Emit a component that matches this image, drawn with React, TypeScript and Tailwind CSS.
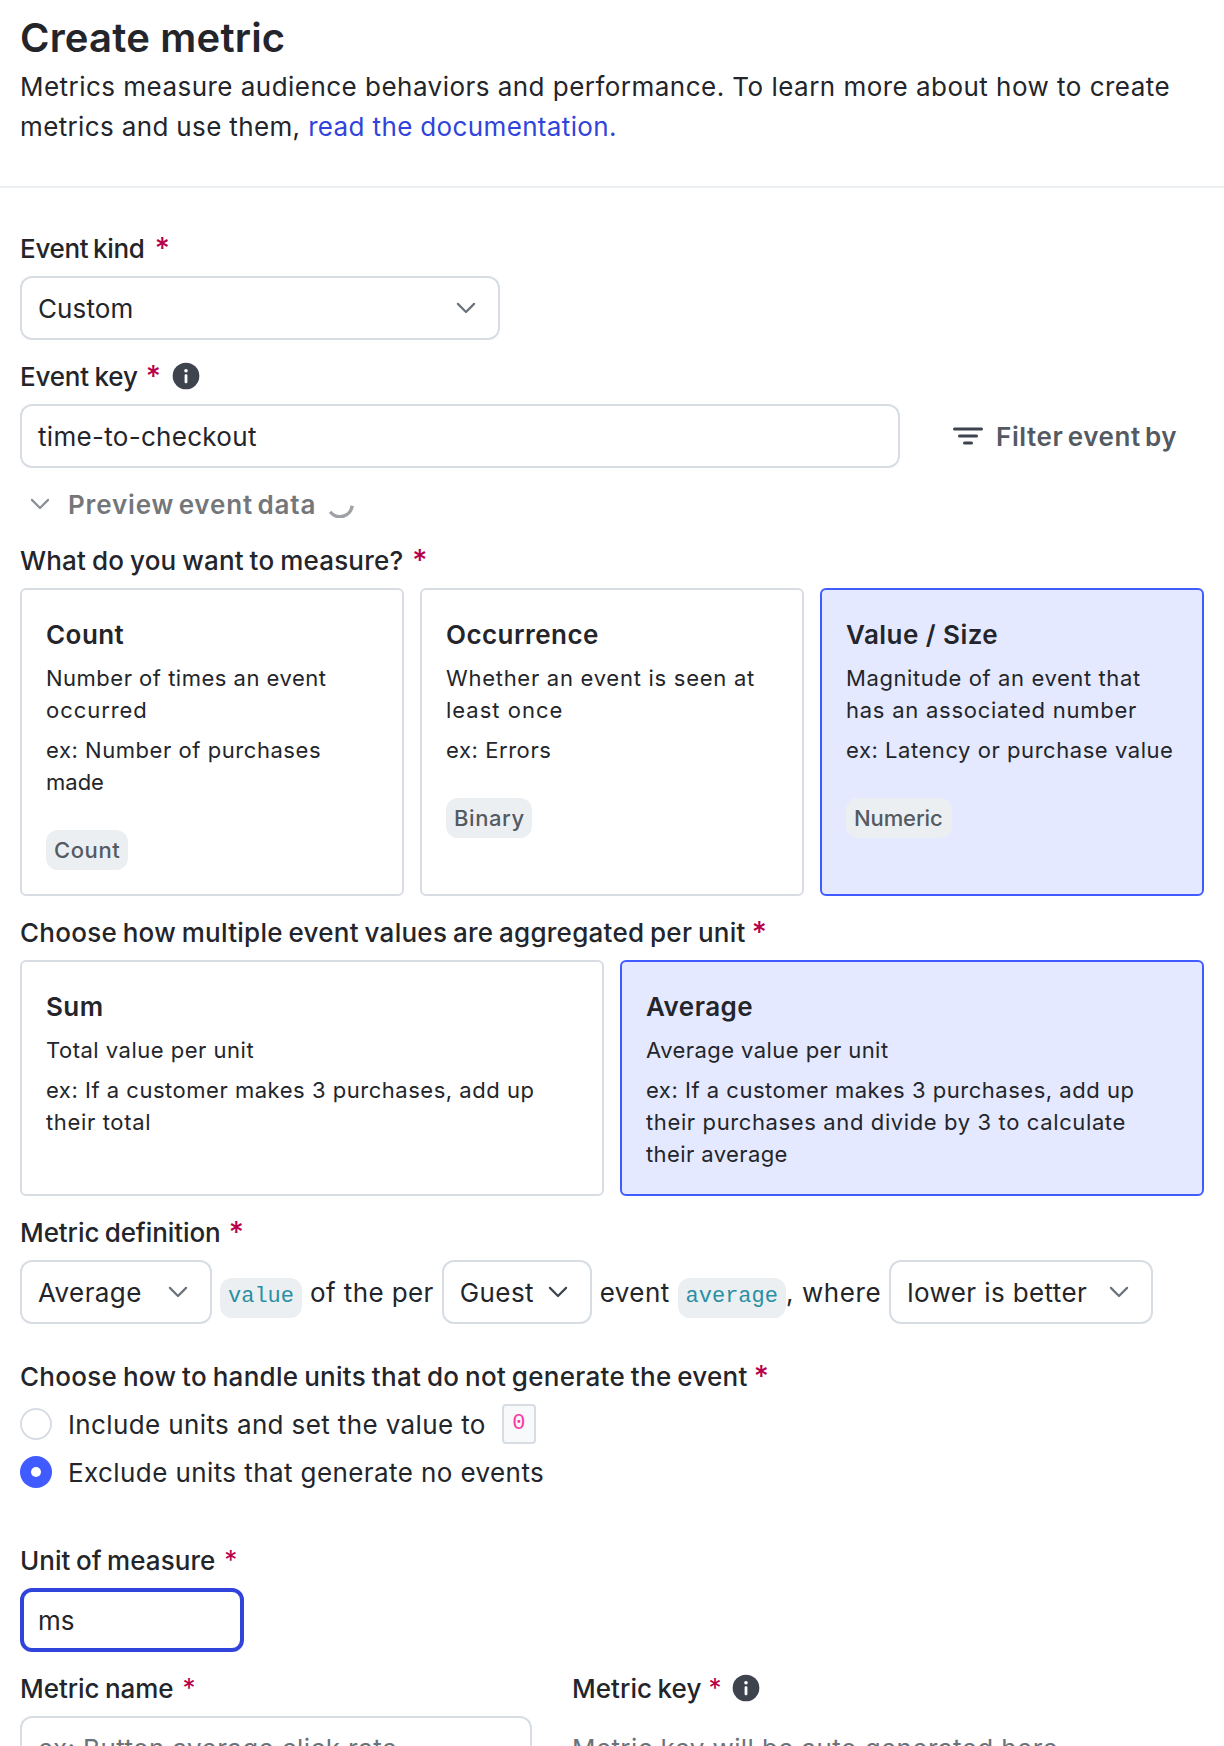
import React from "react";

function Chevron({ className = "text-[#6c727a]" }: { className?: string }) {
  return (
    <svg width="20" height="12" viewBox="0 0 10 6" fill="none" className={`shrink-0 ${className}`}>
      <path d="M.95.95 5 5 9.05.95" stroke="currentColor" strokeWidth="1.1" strokeLinecap="round" strokeLinejoin="round" />
    </svg>
  );
}

function InfoIcon() {
  return (
    <svg width="28" height="28" viewBox="0 0 14 14" className="shrink-0">
      <circle cx="7" cy="7" r="6.67" fill="#3d444d" />
      <circle cx="7" cy="4.35" r="0.9" fill="#fff" />
      <rect x="6.3" y="6.1" width="1.4" height="4.5" rx="0.6" fill="#fff" />
    </svg>
  );
}

function Label({
  children,
  textClass = "",
  starClass = "ml-2 text-[29px] font-medium",
  info = false,
}: {
  children: React.ReactNode;
  textClass?: string;
  starClass?: string;
  info?: boolean;
}) {
  return (
    <div className="mb-2 flex h-10 items-center font-medium whitespace-nowrap">
      <span className={`pt-0.5 ${textClass}`}>{children}</span>
      <span className={`text-[#b8004a] ${starClass}`}>*</span>
      {info && (
        <span className="ml-[11px]">
          <InfoIcon />
        </span>
      )}
    </div>
  );
}

function Select({
  value,
  className,
  chevron,
}: {
  value: string;
  className: string;
  chevron?: string;
}) {
  return (
    <div
      className={`flex h-16 shrink-0 items-center justify-between rounded-xl border-2 border-[#d8dde3] bg-white pr-[22px] pl-4 ${className}`}
    >
      <span className="pt-0.5 whitespace-nowrap">{value}</span>
      <Chevron className={chevron} />
    </div>
  );
}

type Line = [text: string, tracking: string];

function Lines({ lines }: { lines: Line[] }) {
  return (
    <>
      {lines.map(([text, tracking]) => (
        <span key={text} className={`block whitespace-nowrap ${tracking}`}>
          {text}
        </span>
      ))}
    </>
  );
}

function Card({
  title,
  desc,
  example,
  tag,
  tagClass = "",
  selected = false,
}: {
  title: string;
  desc: Line[];
  example: Line[];
  tag?: string;
  tagClass?: string;
  selected?: boolean;
}) {
  return (
    <div
      className={`flex flex-1 basis-0 flex-col items-start rounded-md border-2 p-6 text-[22px] leading-8 ${
        selected ? "border-[#405bff] bg-[#e4e9ff]" : "border-[#d8dde3] bg-white"
      }`}
    >
      <div className="h-10 pt-px text-[26px] leading-10 font-semibold tracking-[0.45px]">{title}</div>
      <p className="mt-2">
        <Lines lines={desc} />
      </p>
      <p className="mt-2">
        <Lines lines={example} />
      </p>
      {tag && (
        <span className={`mt-8 rounded-xl bg-[#ebeff2] py-1 pl-2 font-medium text-[#545a62] ${tagClass}`}>{tag}</span>
      )}
    </div>
  );
}

function Token({ children }: { children: string }) {
  return (
    <span className="mt-3 flex h-10 items-center rounded-xl bg-[#ebeff2] px-2 pb-[2px] font-['Liberation_Mono',monospace] text-[22px] leading-8 tracking-normal text-[#2b8fa4]">
      {children}
    </span>
  );
}

export default function App() {
  return (
    <div className="h-[1746px] w-[1224px] overflow-hidden bg-white font-['Inter',sans-serif] text-[26px] leading-10 text-[#23252a] [font-optical-sizing:none]">
      <header className="h-[188px] border-b-2 border-[#ebeff2] px-5 pt-[10px]">
        <h1 className="text-[40px] leading-[56px] font-semibold tracking-[0.2px]">Create metric</h1>
        <p className="pt-px whitespace-nowrap">
          <span className="block tracking-[0.47px]">
            Metrics measure audience behaviors and performance. To learn more about how to create
          </span>
          <span className="block tracking-[0.36px]">
            metrics and use them, <a className="text-[#3044dc]">read the documentation.</a>
          </span>
        </p>
      </header>

      <main className="flex flex-col gap-4 px-5 pt-10">
        <section>
          <Label textClass="tracking-[-0.3px] [word-spacing:-2px]" starClass="ml-[10px] text-[29px] font-medium">
            Event kind
          </Label>
          <Select value="Custom" className="w-[480px] tracking-[0.1px]" />
        </section>

        <section>
          <Label textClass="tracking-[-0.2px] [word-spacing:-1px]" info>
            Event key
          </Label>
          <div className="flex items-center">
            <div className="flex h-16 w-[880px] items-center rounded-xl border-2 border-[#d8dde3] px-4 tracking-[0.3px]">
              <span className="pt-0.5">time-to-checkout</span>
            </div>
            <div className="ml-[52px] flex items-center font-semibold text-[#545a62]">
              <svg width="32" height="20" viewBox="0 0 16 10" fill="none" stroke="#3d444d" strokeWidth="1.5" strokeLinecap="round">
                <path d="M1.25 1.5h13.5M3.75 5h8.5M6.25 8.5h3.5" />
              </svg>
              <span className="ml-3 pt-0.5 tracking-[0.6px] [word-spacing:-3px]">Filter event by</span>
            </div>
          </div>
        </section>

        <div className="flex h-10 items-center pl-[10px] font-semibold text-[#74767a]">
          <Chevron className="text-[#8b9096]" />
          <span className="ml-[18px] pt-0.5 tracking-[0.85px] [word-spacing:-3px]">Preview event data</span>
          <svg width="28" height="28" viewBox="0 0 14 14" fill="none" className="ml-[10px]">
            <path d="M13.05 7.9A6.1 6.1 0 0 1 2.1 10.9" stroke="#9ea1a6" strokeWidth="1.7" />
          </svg>
        </div>

        <section>
          <Label textClass="tracking-[0.2px] [word-spacing:-1.3px]" starClass="ml-[9px] text-[29px] font-medium">
            What do you want to measure?
          </Label>
          <div className="flex gap-4">
            <Card
              title="Count"
              desc={[
                ["Number of times an event", "tracking-[0.5px]"],
                ["occurred", "tracking-[0.95px]"],
              ]}
              example={[
                ["ex: Number of purchases", "tracking-[0.55px]"],
                ["made", "tracking-normal"],
              ]}
              tag="Count"
              tagClass="w-[82px] tracking-[0.6px]"
            />
            <Card
              title="Occurrence"
              desc={[
                ["Whether an event is seen at", "tracking-[0.73px]"],
                ["least once", "tracking-[1px]"],
              ]}
              example={[["ex: Errors", "tracking-[0.57px]"]]}
              tag="Binary"
              tagClass="w-[86px] tracking-[0.6px]"
            />
            <Card
              title="Value / Size"
              desc={[
                ["Magnitude of an event that", "tracking-[0.6px]"],
                ["has an associated number", "tracking-[0.75px]"],
              ]}
              example={[["ex: Latency or purchase value", "tracking-[0.55px]"]]}
              tag="Numeric"
              tagClass="w-[106px] tracking-[-0.1px]"
              selected
            />
          </div>
        </section>

        <section>
          <Label textClass="tracking-[0.27px] [word-spacing:-1.5px]" starClass="ml-[6px] text-[29px] font-medium">
            Choose how multiple event values are aggregated per unit
          </Label>
          <div className="flex gap-4">
            <Card
              title="Sum"
              desc={[["Total value per unit", "tracking-[0.5px]"]]}
              example={[
                ["ex: If a customer makes 3 purchases, add up", "tracking-[0.52px]"],
                ["their total", "tracking-[0.65px]"],
              ]}
            />
            <Card
              title="Average"
              desc={[["Average value per unit", "tracking-[0.44px]"]]}
              example={[
                ["ex: If a customer makes 3 purchases, add up", "tracking-[0.52px]"],
                ["their purchases and divide by 3 to calculate", "tracking-[0.62px]"],
                ["their average", "tracking-[0.4px]"],
              ]}
              selected
            />
          </div>
        </section>

        <section>
          <Label textClass="tracking-[-0.08px] [word-spacing:-1.5px]">Metric definition</Label>
          <div className="flex h-16 items-center gap-2 whitespace-nowrap">
            <Select value="Average" className="w-[192px] tracking-[0.4px]" />
            <Token>value</Token>
            <span className="pt-0.5 tracking-[0.4px]">of the per</span>
            <Select value="Guest" className="w-[150px] tracking-[0.4px]" chevron="text-[#3d444d]" />
            <span className="pt-0.5 tracking-[0.4px]">event</span>
            <span className="flex items-center">
              <Token>average</Token>
              <span className="pt-0.5 tracking-[0.6px]">, where</span>
            </span>
            <Select value="lower is better" className="w-[264px] tracking-[0.4px]" />
          </div>
        </section>

        <section className="mt-4">
          <Label textClass="tracking-[0.3px] [word-spacing:-1.5px]" starClass="ml-[6px] text-[29px] font-medium">
            Choose how to handle units that do not generate the event
          </Label>
          <div className="flex flex-col gap-2">
            <div className="flex h-10 items-center">
              <span className="size-8 rounded-full border-2 border-[#d8dde3]" />
              <span className="ml-4 pt-0.5 tracking-[0.38px]">Include units and set the value to</span>
              <code className="ml-4 flex h-10 w-[34px] items-center justify-center rounded-[4px] border-2 border-[#d8dde3] bg-[#f7f9fb] font-['Liberation_Mono',monospace] text-[22px] text-[#ff35a2]">
                0
              </code>
            </div>
            <div className="flex h-10 items-center">
              <span className="flex size-8 items-center justify-center rounded-full bg-[#405bff]">
                <span className="size-[10px] rounded-full bg-white" />
              </span>
              <span className="ml-4 pt-0.5 tracking-[0.41px]">Exclude units that generate no events</span>
            </div>
          </div>
        </section>

        <section className="mt-8">
          <Label
            textClass="tracking-[0.05px] [word-spacing:-1.5px]"
            starClass="ml-[9px] text-[26px] font-normal"
          >
            Unit of measure
          </Label>
          <div className="flex h-16 w-[224px] items-center rounded-xl border-4 border-[#3044dc] px-[14px]">
            <span className="pt-0.5">ms</span>
          </div>
        </section>

        <div className="flex gap-10">
          <section className="w-[512px]">
            <Label
              textClass="tracking-[-0.04px] [word-spacing:-1.5px]"
              starClass="ml-[9px] text-[26px] font-normal"
            >
              Metric name
            </Label>
            <div className="flex h-16 items-center rounded-xl border-2 border-[#d8dde3] px-4 tracking-[0.38px] text-[#6c727a]">
              <span className="pt-0.5">ex: Button average click rate</span>
            </div>
          </section>
          <section>
            <Label
              textClass="tracking-[0.05px] [word-spacing:-1.5px]"
              starClass="ml-[7px] text-[26px] font-normal"
              info
            >
              Metric key
            </Label>
            <div className="flex h-16 items-center tracking-[0.4px] text-[#6c727a]">
              <span className="pt-0.5">Metric key will be auto generated here</span>
            </div>
          </section>
        </div>
      </main>
    </div>
  );
}
